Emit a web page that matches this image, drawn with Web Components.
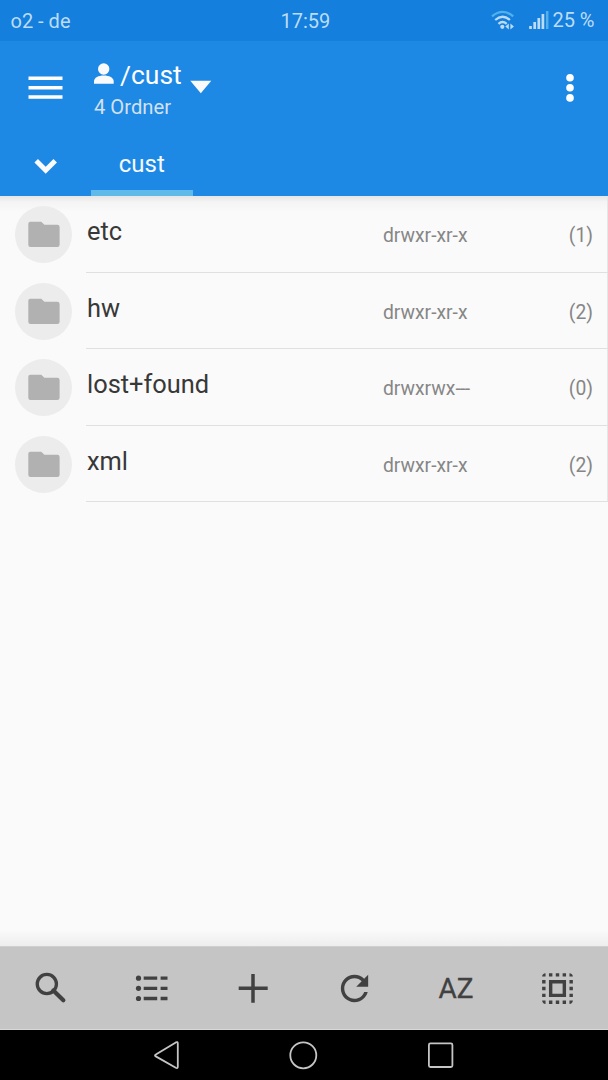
<!DOCTYPE html>
<html lang="de">
<head>
<meta charset="utf-8">
<title>cust</title>
<style>
html,body{margin:0;height:100%}
body{font-family:Roboto,"Noto Sans",sans-serif;background:#fafafa;overflow:hidden}
</style>
</head>
<body>
<file-manager></file-manager>
<script>
const define = (name, html, init) => {
  const t = document.createElement('template');
  t.innerHTML = html;
  customElements.define(name, class extends HTMLElement {
    constructor() {
      super();
      this.attachShadow({mode: 'open'}).append(t.content.cloneNode(true));
    }
    connectedCallback() { if (init) init(this, this.shadowRoot); }
  });
};

define('status-bar', `
<style>
:host{display:grid;grid-template-columns:270px auto 1fr;height:41px;background:#147fdd;color:#bcdcf6;font-size:20px;line-height:43px;padding:0 13.500px 0 10.500px;box-sizing:border-box;white-space:nowrap}
.right{display:flex;justify-content:flex-end}
svg{display:block;flex:none}
.bat{margin-top:-1px}
</style>
<span>o2 - de</span><span><slot></slot></span>
<div class="right">
<svg width="62" height="41" viewBox="490.500 0 62 41" fill="none" stroke="#bcdcf6" stroke-width="2.3">
<path d="M492.500 16.300Q503 7.500 513.700 16.300" stroke="#52b1ea"/>
<path d="M495.700 20Q503 13.600 510.400 20M499 23.800Q503 20.200 507.200 23.800"/>
<circle cx="502.800" cy="26.800" r="2.100" fill="#bcdcf6" stroke="none"/>
<path d="M509.300 23.400V29.600L505.800 26.500ZM510.900 23.400V29.600L514.400 26.500Z" fill="#bcdcf6" stroke="none"/>
<path d="M531 26V29M535.200 22V29M539.300 18V29M543.400 14V29" stroke-width="2.700"/>
<path d="M547.700 11V29" stroke="#52b1ea" stroke-width="2.500"/>
</svg><span class="bat">25 %</span></div>`);

define('app-header', `
<style>
:host{display:grid;grid-template-columns:94px 1fr 76px;height:94px;background:#1e88e5;color:#fff}
svg{display:block}
.t{display:flex;height:36px;margin-top:17px}
.p{font-size:26.500px;line-height:34px;margin-left:6px;width:64px}
.s{font-size:20.200px;line-height:26px;color:#d3e1ee}
</style>
<svg width="94" height="94" viewBox="0 41 94 94" fill="#fff"><path d="M28.500 76.500h34v3.400h-34zM28.500 86h34v3.400h-34zM28.500 95.300h34v3.400h-34z"/></svg>
<div><div class="t">
<svg width="20" height="36" viewBox="94 58 20 36" fill="#fafafa"><circle cx="103.700" cy="69" r="5.700"/><path d="M94 83.800V81.500C94 77.500 98.500 75.500 103.800 75.500S113.700 77.500 113.700 81.500V83.800Z"/></svg>
<span class="p"><slot name="path"></slot></span>
<svg style="margin-left:6px" width="22" height="36" viewBox="190 58 22 36" fill="#fafafa"><path d="M190.300 80.700H211.300L200.800 93.300Z"/></svg>
</div><div class="s"><slot name="info"></slot></div></div>
<svg width="76" height="94" viewBox="532 41 76 94" fill="#fff"><circle cx="570" cy="77.800" r="3.800"/><circle cx="570" cy="87.800" r="3.800"/><circle cx="570" cy="97.900" r="3.800"/></svg>`);

define('tab-strip', `
<style>
:host{display:flex;height:61px;background:#1e88e5;color:#f5f9fd}
.tab{box-sizing:border-box;width:101.500px;height:61px;border-bottom:6px solid #5fbae9;text-align:center;font-size:24px;line-height:58px}
</style>
<svg width="91" height="61" viewBox="0 135 91 61" fill="none" stroke="#fafafa" stroke-width="5"><path d="M36.200 160.800L45.700 170.200L55.200 160.800"/></svg>
<div class="tab"><slot></slot></div>`);

define('file-row', `
<style>
:host{display:grid;grid-template-columns:86px 1fr;height:76.500px;box-shadow:inset -1px 0 #e6e6e6}
.av{width:57px;height:57px;border-radius:50%;background:#ececec;margin:10px 0 0 15px}
.av svg{display:block}
.b{display:grid;grid-template-columns:297px 1fr auto;height:76.500px;border-bottom:1px solid #e0e0e0;padding-right:15px;box-sizing:border-box;white-space:nowrap}
.n{font-size:25.400px;line-height:71px;padding-left:1px;color:#383838}
.m{font-size:19.300px;line-height:79px;color:#868686}
i{font-style:normal;letter-spacing:-.600px}
</style>
<div class="av"><svg width="57" height="57" viewBox="0 0 57 57" fill="#b1b1b1"><path d="M15.300 15.700H26.300L29.400 18.800H42.400Q44.600 18.800 44.600 21V38.700Q44.600 40.900 42.400 40.900H15.500Q13.300 40.900 13.300 38.700V17.700Q13.300 15.700 15.300 15.700Z"/></svg></div>
<div class="b"><span class="n"><slot></slot></span><span class="m p"></span><span class="m c"></span></div>`,
(el, r) => {
  const mode = el.getAttribute('mode');
  const p = r.querySelector('.p');
  const tail = mode.match(/-{2,}$/);
  if (tail) {
    const i = document.createElement('i');
    i.textContent = tail[0];
    p.append(mode.slice(0, tail.index), i);
  } else p.textContent = mode;
  r.querySelector('.c').textContent = '(' + el.getAttribute('count') + ')';
});

define('tool-bar', `
<style>
:host{display:grid;grid-template-columns:repeat(6,1fr);place-items:center;height:84px;background:#c5c5c5;border-top:1px solid #d0d0d0;border-bottom:1px solid #d8d8d8;box-sizing:border-box;color:#414141}
svg{display:block;width:40px;height:40px;fill:none;stroke:#414141}
.m{width:41px;height:41px;fill:#414141;stroke:none}
span{font-size:28px;line-height:40px;padding-top:2px;-webkit-text-stroke:.300px #414141}
</style>
<svg viewBox="30.670 968 40 40"><circle cx="46.500" cy="984" r="9.600" stroke-width="3.300"/><path d="M53 990.500L63 1000.300" stroke-width="4.200" stroke-linecap="round"/></svg>
<svg viewBox="132 968 40 40" stroke-width="3.300"><path d="M143.700 978.200h13.500m3.400 0h6.900M143.700 988.300h13.500m3.400 0h6.900M143.700 998.500h13.500m3.400 0h6.900"/><g fill="#414141" stroke="none"><circle cx="138.500" cy="978.200" r="2.600"/><circle cx="138.500" cy="988.300" r="2.600"/><circle cx="138.500" cy="998.500" r="2.600"/></g></svg>
<svg viewBox="233.300 968 40 40" stroke-width="3.500"><path d="M239 988.300h29M253.300 974v28.800"/></svg>
<svg class="m" viewBox="0 0 24 24"><path d="M17.650 6.350C16.200 4.900 14.210 4 12 4c-4.420 0-7.990 3.580-7.990 8s3.570 8 7.990 8c3.730 0 6.840-2.550 7.730-6h-2.080c-.820 2.330-3.040 4-5.650 4-3.310 0-6-2.690-6-6s2.690-6 6-6c1.660 0 3.140.690 4.220 1.780L13 11h7V4l-2.350 2.350z"/></svg>
<span>AZ</span>
<svg class="m" viewBox="0 0 24 24"><path d="M3 5h2V3c-1.100 0-2 .9-2 2zm0 8h2v-2H3v2zm4 8h2v-2H7v2zM3 9h2V7H3v2zm10-6h-2v2h2V3zm6 0v2h2c0-1.100-.9-2-2-2zM5 21v-2H3c0 1.100.9 2 2 2zm-2-4h2v-2H3v2zM9 3H7v2h2V3zm2 18h2v-2h-2v2zm8-8h2v-2h-2v2zm0 8c1.100 0 2-.9 2-2h-2v2zm0-12h2V7h-2v2zm0 8h2v-2h-2v2zm-4 4h2v-2h-2v2zm0-16h2V3h-2v2zM7 17h10V7H7v10zm2-8h6v6H9V9z"/></svg>`);

define('nav-bar', `
<style>
:host{display:grid;grid-template-columns:98px repeat(3,137px) 1fr;height:50px;background:#000}
svg{display:block;fill:none;stroke:#c5c5c5;stroke-width:1.800;stroke-linejoin:round}
svg:first-of-type{grid-column:2}
</style>
<svg viewBox="98 1030 137 50"><path d="M155.800 1054.600L175.800 1042.400Q177.800 1041.400 177.800 1043.400V1066.800Q177.800 1068.800 175.800 1067.800L155.800 1056.400Q154.200 1055.500 155.800 1054.600Z"/></svg>
<svg viewBox="235 1030 137 50"><circle cx="303.300" cy="1055.300" r="13"/></svg>
<svg viewBox="372 1030 137 50"><rect x="428.900" y="1043.400" width="23.500" height="23.600" rx="1.500"/></svg>`);

define('file-manager', `
<style>
:host{display:flex;flex-direction:column;height:1080px;width:608px}
main{flex:1;background:linear-gradient(#e6e6e6,#f4f4f4 6px,#fafafa 16px,#fafafa calc(100% - 16px),#eee)}
</style>
<status-bar>17:59</status-bar>
<app-header><span slot="path">/cust</span><span slot="info">4 Ordner</span></app-header>
<tab-strip>cust</tab-strip>
<main>
<file-row mode="drwxr-xr-x" count="1">etc</file-row>
<file-row mode="drwxr-xr-x" count="2">hw</file-row>
<file-row mode="drwxrwx---" count="0">lost+found</file-row>
<file-row mode="drwxr-xr-x" count="2">xml</file-row>
</main>
<tool-bar></tool-bar>
<nav-bar></nav-bar>`);
</script>
</body>
</html>
